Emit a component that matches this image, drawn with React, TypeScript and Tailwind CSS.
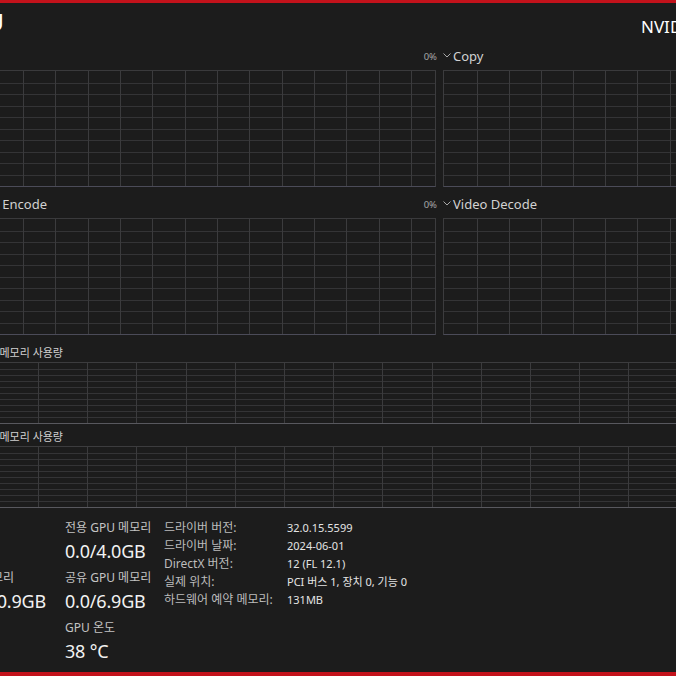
import React from 'react'

type GridProps = { w: number; h: number; x0: number; dx: number; rows: number }

const Grid = ({ w, h, x0, dx, rows }: GridProps) => {
  const xs: number[] = []
  for (let x = x0; x < w; x += dx) xs.push(Math.round(x) + 0.5)
  const ys: number[] = []
  for (let i = 1; i < rows; i++) ys.push(Math.round((i * h) / rows) + 0.5)
  return (
    <svg width={w} height={h} className="block">
      {ys.map((y) => (
        <line key={'h' + y} x1={0} x2={w} y1={y} y2={y} stroke="#343436" strokeWidth={1} />
      ))}
      {xs.map((x) => (
        <line key={'v' + x} x1={x} x2={x} y1={0} y2={h} stroke="#3b3b3d" strokeWidth={1} />
      ))}
    </svg>
  )
}

const Chevron = () => (
  <svg width="8" height="5" viewBox="0 0 8 5" className="mb-[3px] shrink-0">
    <path d="M0.5 0.5 L4 4 L7.5 0.5" stroke="#a8a8a8" fill="none" strokeWidth="1" />
  </svg>
)

const SmallRow = ({ left, right }: { left?: string; right: string }) => (
  <div className="flex gap-[7px] shrink-0">
    <div className="w-[436px] shrink-0">
      <div className="h-[18px] mb-[4px] flex justify-between items-center">
        {left ? (
          <div className="w-[47px] flex justify-end">
            <span className="text-[13px] text-[#d2d2d2] whitespace-nowrap">{left}</span>
          </div>
        ) : (
          <span />
        )}
        <span className="text-[9.5px] text-[#a6a6a6] mr-[-1px]">0%</span>
      </div>
      <div className="h-[117px] border-t border-r border-b border-t-[#3a3a3c] border-r-[#3c3c3e] border-b-[#4b4b58]">
        <Grid w={435} h={115} x0={23} dx={32.33} rows={10} />
      </div>
    </div>
    <div className="w-[300px] shrink-0">
      <div className="h-[18px] mb-[4px] flex items-center gap-[2px]">
        <Chevron />
        <span className="text-[13px] text-[#d2d2d2] whitespace-nowrap">{right}</span>
      </div>
      <div className="h-[117px] border-t border-l border-b border-t-[#3a3a3c] border-l-[#3c3c3e] border-b-[#4b4b58]">
        <Grid w={299} h={115} x0={33} dx={32.1} rows={10} />
      </div>
    </div>
  </div>
)

const MemChart = ({ label }: { label: string }) => (
  <div className="shrink-0">
    <div className="h-[18px] flex items-center">
      <div className="w-[63px] flex justify-end shrink-0">
        <span className="text-[11px] text-[#cfcfcf] whitespace-nowrap">{label}</span>
      </div>
    </div>
    <div className="h-[62px] w-[676px] border-t border-b border-t-[#3c3c3e] border-b-[#58585e]">
      <Grid w={676} h={60} x0={38} dx={49.2} rows={10} />
    </div>
  </div>
)

const stats = [
  { label: '전용 GPU 메모리', value: '0.0/4.0GB' },
  { label: '공유 GPU 메모리', value: '0.0/6.9GB' },
  { label: 'GPU 온도', value: '38 °C' },
]

const info = [
  ['드라이버 버전:', '32.0.15.5599'],
  ['드라이버 날짜:', '2024-06-01'],
  ['DirectX 버전:', '12 (FL 12.1)'],
  ['실제 위치:', 'PCI 버스 1, 장치 0, 기능 0'],
  ['하드웨어 예약 메모리:', '131MB'],
]

export default function App() {
  return (
    <div className="w-[676px] h-[676px] overflow-hidden bg-[#1c1c1c] border-t-[3px] border-b-[4px] border-[#c3121b] flex flex-col font-['Noto_Sans','Noto_Sans_CJK_KR',sans-serif] text-white">
      <div className="h-[45px] flex justify-between shrink-0">
        <div className="w-[4px] flex justify-end mt-[5px]">
          <span className="text-[24px] leading-[28px] whitespace-nowrap">GPU</span>
        </div>
        <div className="w-[35px] mt-[12px] text-[17px] leading-[24px] whitespace-nowrap">
          NVIDIA GeForce GTX 1650
        </div>
      </div>

      <SmallRow right="Copy" />
      <div className="h-[9px] shrink-0" />
      <SmallRow left="Video Encode" right="Video Decode" />

      <div className="h-[9px] shrink-0" />
      <MemChart label="전용 GPU 메모리 사용량" />
      <div className="h-[4px] shrink-0" />
      <MemChart label="공유 GPU 메모리 사용량" />

      <div className="flex mt-[11px] shrink-0">
        <div className="w-[46px] shrink-0 flex flex-col">
          <div className="h-[50px]" />
          <div className="h-[18px] w-[14px] flex justify-end items-center">
            <span className="text-[12px] text-[#c4c4c4] whitespace-nowrap">GPU 메모리</span>
          </div>
          <div className="h-[28px] w-[46px] flex justify-end items-center">
            <span className="text-[18px] tracking-[-0.2px] text-[#f2f2f2] whitespace-nowrap">0.0/10.9GB</span>
          </div>
        </div>

        <div className="ml-[19px] w-[99px] shrink-0 flex flex-col gap-[4px]">
          {stats.map((s) => (
            <div key={s.label}>
              <div className="h-[18px] leading-[18px] text-[12px] text-[#c4c4c4] whitespace-nowrap">{s.label}</div>
              <div className="h-[28px] leading-[28px] text-[18px] tracking-[-0.2px] text-[#f2f2f2] whitespace-nowrap">{s.value}</div>
            </div>
          ))}
        </div>

        <div className="grid grid-cols-[123px_auto] auto-rows-[18px] leading-[18px]">
          {info.map(([k, v]) => (
            <React.Fragment key={k}>
              <span className="text-[12px] text-[#bdbdbd] whitespace-nowrap">{k}</span>
              <span className="text-[11px] text-[#e4e4e4] whitespace-nowrap">{v}</span>
            </React.Fragment>
          ))}
        </div>
      </div>
    </div>
  )
}
